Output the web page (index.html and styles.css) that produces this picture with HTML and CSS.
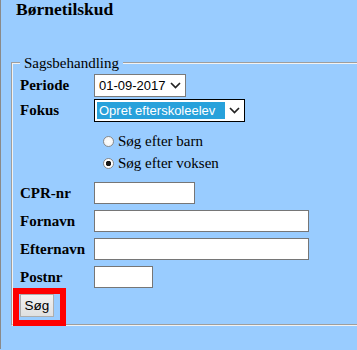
FILE: index.html
```html
<!DOCTYPE html>
<html lang="da">
  <head>
    <meta charset="UTF-8" />
    <meta name="viewport" content="width=device-width, initial-scale=1.0" />
    <title>Børnetilskud</title>
    <link rel="stylesheet" href="styles.css">
  </head>
  <body>
    <div class="page">
      <div class="title">Børnetilskud</div>

      <fieldset class="search">
        <legend>Sagsbehandling</legend>

        <div class="row row-top">
          <label for="periode">Periode</label>
          <span class="select-wrap">
            <select id="periode" class="select period">
              <option>01-09-2017</option>
            </select>
            <svg class="chevron" width="11" height="7" viewBox="0 0 11 7"><path d="M1 1 L5.5 5.5 L10 1" /></svg>
          </span>
        </div>

        <div class="row row-tight">
          <label for="fokus">Fokus</label>
          <span class="select-wrap">
            <select id="fokus" class="select focus">
              <option>Opret efterskoleelev</option>
            </select>
            <svg class="chevron" width="11" height="7" viewBox="0 0 11 7"><path d="M1 1 L5.5 5.5 L10 1" /></svg>
          </span>
        </div>

        <div class="radio-group">
          <label class="radio"><input type="radio" name="type" /> Søg efter barn</label>
          <label class="radio"><input type="radio" name="type" checked /> Søg efter voksen</label>
        </div>

        <div class="row row-top">
          <label for="cpr">CPR-nr</label>
          <input type="text" id="cpr" class="field cpr" />
        </div>
        <div class="row">
          <label for="fornavn">Fornavn</label>
          <input type="text" id="fornavn" class="field name" />
        </div>
        <div class="row">
          <label for="efternavn">Efternavn</label>
          <input type="text" id="efternavn" class="field name" />
        </div>
        <div class="row">
          <label for="postnr">Postnr</label>
          <input type="text" id="postnr" class="field postnr" />
        </div>

        <div class="highlight">
          <button class="search-btn">Søg</button>
        </div>
      </fieldset>
    </div>
  </body>
</html>
```

FILE: styles.css
```css
body {
  margin: 0;
  padding: 0;
  background-color: #99ccff;
  font-family: "Liberation Serif", "Times New Roman", serif;
  color: #000;
  overflow: hidden;
}
.page {
  border-left: 1px solid #8a8a8a;
  min-height: 350px;
  width: 460px;
}
.title {
  padding-left: 15px;
  font-size: 17.5px;
  font-weight: bold;
  line-height: 20px;
  height: 14px;
  margin-top: -1px;
}
.search {
  margin: 42px 0 0 10px;
  padding: 3px 0 0 7px;
  border: 2px groove #f2f2f2;
  width: 420px;
}
.search legend {
  padding: 0 4px;
  font-size: 15px;
  line-height: 16px;
}
.row {
  display: flex;
  align-items: center;
  height: 22px;
  margin-top: 6px;
  font-size: 15px;
}
.row.row-top {
  margin-top: 0;
}
.row.row-tight {
  margin-top: 2px;
}
.row > label {
  width: 74px;
  font-weight: bold;
}
.select-wrap {
  position: relative;
  display: inline-block;
  height: 23px;
}
.row-tight,
.row-top:first-of-type {
  height: 23px;
}
.select {
  appearance: none;
  -webkit-appearance: none;
  box-sizing: border-box;
  height: 23px;
  margin: 0;
  padding: 0 0 0 4px;
  border: 1px solid #7a7a7a;
  border-radius: 0;
  background-color: #fff;
  font-family: "Liberation Sans", Arial, sans-serif;
  font-size: 13px;
  color: #000;
}
.select.period {
  width: 92px;
}
.select.focus {
  width: 151px;
  border-color: #000;
  color: #fff;
  background-image: linear-gradient(#27a1db, #27a1db);
  background-size: 128px 17px;
  background-position: 2px 2px;
  background-repeat: no-repeat;
}
.chevron {
  position: absolute;
  right: 5px;
  top: 8px;
  fill: none;
  stroke: #222;
  stroke-width: 1.7;
  pointer-events: none;
}
.radio-group {
  display: flex;
  flex-direction: column;
  padding: 8px 0 8px 83px;
  font-size: 15px;
}
.radio {
  display: flex;
  align-items: center;
  gap: 4px;
  height: 22px;
}
.radio input {
  appearance: none;
  -webkit-appearance: none;
  width: 11px;
  height: 11px;
  margin: 0;
  border: 1px solid #8a8a8a;
  border-radius: 50%;
  background: radial-gradient(circle, #fff 0, #f0f0f0 100%);
}
.radio input:checked {
  background: radial-gradient(circle, #1a1a1a 0, #1a1a1a 2.5px, #fff 3px);
}
.field {
  box-sizing: border-box;
  height: 22px;
  margin: 0;
  padding: 1px 3px;
  border: 1px solid #767676;
  background-color: #fff;
}
.field.cpr {
  width: 101px;
}
.field.name {
  width: 215px;
}
.field.postnr {
  width: 59px;
}
.highlight {
  display: inline-block;
  margin: 0 0 -2px -7px;
  padding: 0 6px 3px 1px;
  border: 6px solid #ff0000;
  line-height: 0;
}
.search-btn {
  box-sizing: border-box;
  width: 34px;
  height: 23px;
  margin: 0;
  padding: 0;
  border: 1px solid #adadad;
  background: linear-gradient(#f2f2f2, #e0e0e0);
  font-family: "Liberation Sans", Arial, sans-serif;
  font-size: 13.5px;
  color: #000;
}
```
